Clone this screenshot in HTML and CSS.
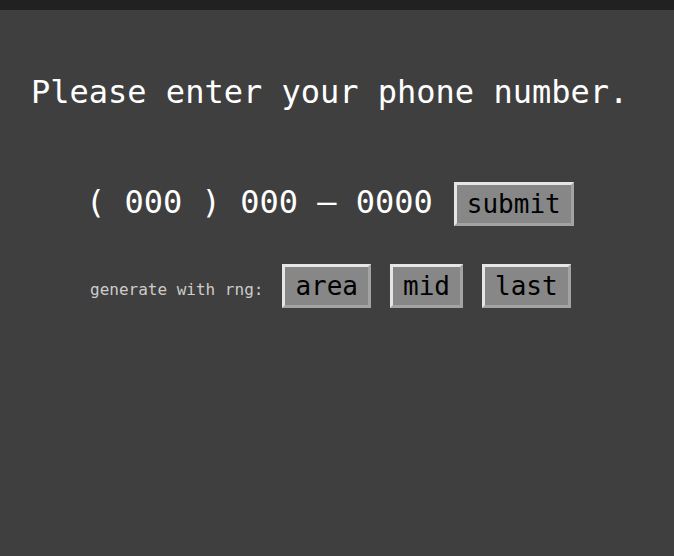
FILE: index.html
```html
<!DOCTYPE html>
<html>
<head>
<meta charset="utf-8">
<link rel="stylesheet" href="styles.css">
</head>
<body>
<div class="topbar"></div>
<main class="page">
  <h1 class="title">Please enter your phone number.</h1>
  <div class="phone-row">
    <span class="phone">( 000 ) 000 – 0000</span>
    <button class="btn">submit</button>
  </div>
  <div class="rng-row">
    <span class="rng-label">generate with rng:</span>
    <button class="btn">area</button>
    <button class="btn">mid</button>
    <button class="btn">last</button>
  </div>
</main>
</body>
</html>
```
FILE: styles.css
```css
html, body {
  margin: 0;
  padding: 0;
  background: #3f3f3f;
  height: 100%;
}
body {
  font-family: "DejaVu Sans Mono", monospace;
  color: #ffffff;
}
.topbar {
  height: 10px;
  background: #212121;
}
.page {
  padding: 63px 0 0 31px;
}
.title {
  margin: 0;
  font-size: 32px;
  font-weight: normal;
  line-height: normal;
}
.phone-row {
  display: flex;
  align-items: baseline;
  margin-top: 71px;
  padding-left: 55px;
  gap: 21px;
}
.phone {
  font-size: 32px;
  white-space: pre;
}
.btn {
  font-family: "DejaVu Sans Mono", monospace;
  font-size: 26px;
  line-height: 30px;
  color: #000;
  background: #878787;
  border: 3px solid;
  border-color: #e6e6e6 #a3a3a3 #a3a3a3 #e6e6e6;
  padding: 4px 10px;
  margin: 0;
}
.rng-row {
  display: flex;
  align-items: baseline;
  margin-top: 38px;
  padding-left: 59px;
  gap: 19px;
}
.rng-label {
  font-size: 16px;
  color: #cccccc;
}
```
